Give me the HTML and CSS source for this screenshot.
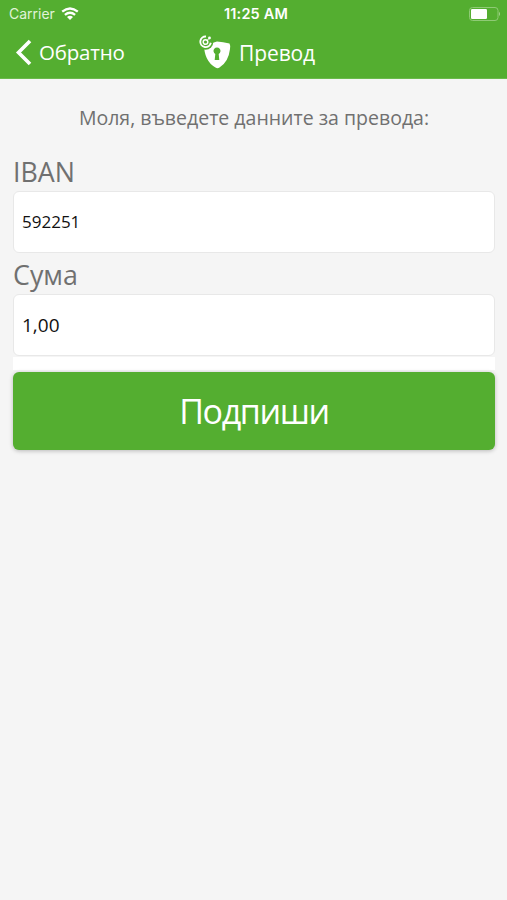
FILE: index.html
```html
<!DOCTYPE html>
<html lang="bg">
<head>
<meta charset="utf-8">
<title>Превод</title>
<link rel="stylesheet" href="styles.css">
</head>
<body>
<header class="header">
  <div class="status">
    <div class="carrier"><span>Carrier</span>
      <svg class="wifi" viewBox="0 0 18 13" width="18" height="13"><g fill="none" stroke="#fff" stroke-width="2.300"><path d="M1.200 4.700Q9-1.800 16.800 4.700"/><path d="M3.900 7.800Q9 3.600 14.100 7.800"/></g><path fill="#fff" d="M6 10Q9 7.600 12 10L9 13Z"/></svg>
    </div>
    <div class="time">11:25 AM</div>
    <svg class="battery" viewBox="0 0 32 14" width="32" height="14"><rect x=".5" y=".5" width="28.500" height="13" rx="3" fill="none" stroke="#8fca75"/><rect x="2" y="2" width="16" height="10" rx="1.200" fill="#fff"/><path d="M30 4.800Q32 7 30 9.200Z" fill="#a5d58f"/></svg>
  </div>
  <nav class="nav">
    <a class="back"><svg viewBox="0 0 18 28" width="18" height="28"><path d="M16 3L4.500 14.500L16 26" fill="none" stroke="#fff" stroke-width="3.600"/></svg><span>Обратно</span></a>
    <div class="title">
      <svg viewBox="0 0 34 36" width="34" height="36"><path d="M5 10Q12 10 18 7.500Q24 8 30.500 9.500Q31.500 11 31 15Q29.500 28 20.500 33.500Q18.500 35 16.500 33.500Q5 27 5 10Z" fill="#fff"/><circle cx="6.500" cy="8" r="7.800" fill="#54ae30"/><path d="M7 2.500A5.300 5.300 0 1 0 11.800 8.800" fill="none" stroke="#fff" stroke-width="1.900"/><circle cx="6.500" cy="8" r="2.300" fill="none" stroke="#fff" stroke-width="1.500"/><path d="M7.500 7L10.500 4" stroke="#fff" stroke-width="1"/><circle cx="10.500" cy="4" r="1.400" fill="#fff"/><path d="M16.300 20A3.500 3.500 0 1 1 19.700 20L20.300 26H15.700Z" fill="#54ae30"/></svg>
      <h1>Превод</h1>
    </div>
  </nav>
</header>
<main class="form">
  <p class="prompt">Моля, въведете данните за превода:</p>
  <label for="iban">IBAN</label>
  <input id="iban" class="iban" value="592251">
  <label for="amount">Сума</label>
  <input id="amount" class="amount" value="1,00">
  <div class="strip"></div>
  <button class="sign">Подпиши</button>
</main>
</body>
</html>
```
FILE: styles.css
```css
* { box-sizing: border-box; }
body {
  margin: 0;
  min-height: 900px;
  background: #f5f5f5;
  color: #707070;
  font-family: "Open Sans", "Noto Sans", sans-serif;
}
svg { display: block; flex: none; }
.header {
  height: 79px;
  background: #54ae30;
  border-bottom: 1px solid #6aba4b;
  color: #fff;
}
.status {
  display: grid;
  grid-template-columns: 1fr auto 1fr;
  align-items: center;
  height: 27px;
  padding: 0 6px 0 9px;
  font: 14px/27px Inter, sans-serif;
}
.carrier { display: flex; align-items: center; gap: 6px; color: #e0f3d8; }
.time { padding-left: 2px; font-size: 14.5px; font-weight: 600; letter-spacing: .2px; }
.battery { justify-self: end; }
.nav {
  display: flex;
  align-items: center;
  height: 50px;
  padding-left: 14px;
}
.back { display: flex; align-items: center; width: 185px; gap: 7px; font-size: 20.5px; letter-spacing: -.2px; }
.title { display: flex; align-items: center; gap: 6px; }
.title h1 { margin: 2px 0 0; font-size: 21px; font-weight: 370; letter-spacing: -.1px; }
.form { display: flex; flex-direction: column; padding: 0 12px 0 13px; }
.prompt { margin: 24px 0 20px; height: 30px; line-height: 30px; font-size: 19.5px; text-align: center; }
label { height: 38px; line-height: 37px; font-size: 26.8px; font-weight: 380; }
input {
  width: 100%;
  height: 62px;
  padding: 0 8px 1px;
  border: 1px solid #e8e8e8;
  border-radius: 6px;
  background: #fff;
  color: #111;
  font-family: "Open Sans", "Noto Sans", sans-serif;
}
.iban { font-size: 17px; margin-bottom: 3px; }
.amount { font-size: 19px; padding-bottom: 0; }
.strip { height: 13px; margin: 1px 0 2px; background: #fff; }
.sign {
  height: 78px;
  padding: 0 0 1px;
  border: 0;
  border-radius: 6px;
  background: #54ae30;
  box-shadow: 0 1px 4px rgba(0, 0, 0, .25);
  color: #fff;
  font: 370 34px "Open Sans", "Noto Sans", sans-serif;
  letter-spacing: -1.4px;
}
```
